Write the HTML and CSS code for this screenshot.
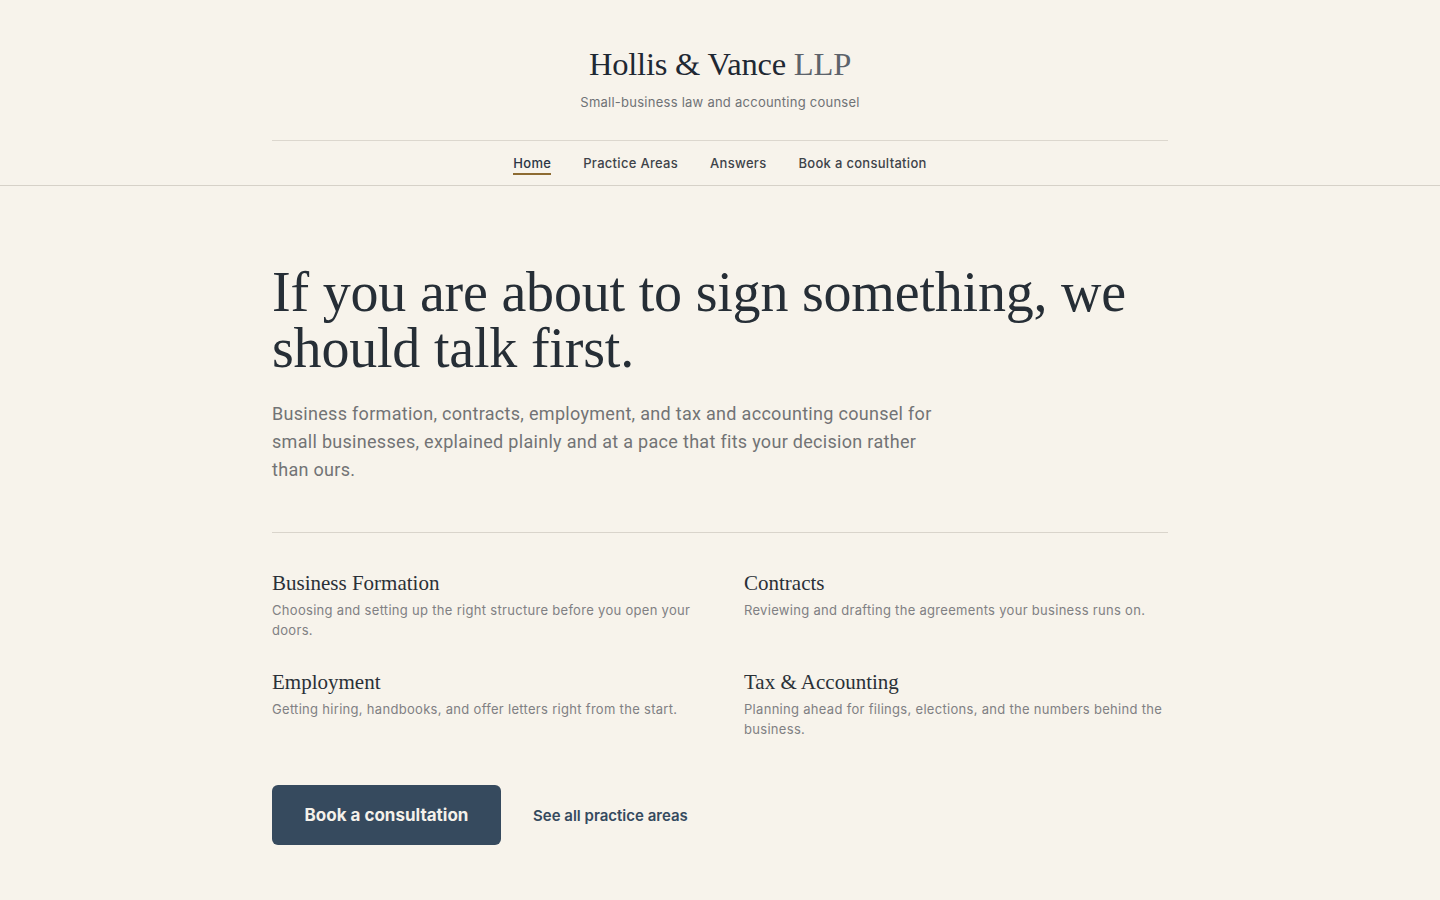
FILE: index.html
```html
<!DOCTYPE html>
<html lang="en">
<head>
<meta charset="utf-8">
<title>Hollis &amp; Vance LLP</title>
<link rel="stylesheet" href="styles.css">
</head>
<body>
<header class="site-header">
  <div class="container brand">
    <div class="logo">Hollis &amp; Vance <span class="llp">LLP</span></div>
    <div class="tagline">Small-business law and accounting counsel</div>
  </div>
  <nav class="nav">
    <div class="container nav-inner">
      <a class="nav-link active" href="#">Home</a>
      <a class="nav-link" href="#">Practice Areas</a>
      <a class="nav-link" href="#">Answers</a>
      <a class="nav-link" href="#">Book a consultation</a>
    </div>
  </nav>
</header>
<main class="container main">
  <h1 class="hero-title">If you are about to sign something, we should talk first.</h1>
  <p class="lede">Business formation, contracts, employment, and tax and accounting counsel for small businesses, explained plainly and at a pace that fits your decision rather than ours.</p>
  <hr class="divider">
  <section class="areas">
    <div class="area">
      <h2 class="area-title">Business Formation</h2>
      <p class="area-desc">Choosing and setting up the right structure before you open your doors.</p>
    </div>
    <div class="area">
      <h2 class="area-title">Contracts</h2>
      <p class="area-desc">Reviewing and drafting the agreements your business runs on.</p>
    </div>
    <div class="area">
      <h2 class="area-title">Employment</h2>
      <p class="area-desc">Getting hiring, handbooks, and offer letters right from the start.</p>
    </div>
    <div class="area">
      <h2 class="area-title">Tax &amp; Accounting</h2>
      <p class="area-desc">Planning ahead for filings, elections, and the numbers behind the business.</p>
    </div>
  </section>
  <div class="actions">
    <a class="btn" href="#">Book a consultation</a>
    <a class="text-link" href="#">See all practice areas</a>
  </div>
</main>
</body>
</html>
```
FILE: styles.css
```css
* { box-sizing: border-box; }
html, body { margin: 0; padding: 0; }
body {
  background: #f7f3eb;
  color: #232a31;
  font-family: Inter, "Noto Sans", sans-serif;
}
.container {
  width: 896px;
  margin: 0 auto;
}
.brand {
  padding-top: 44px;
  padding-bottom: 30px;
  text-align: center;
  border-bottom: 1px solid #dcd7ce;
}
.logo {
  font-family: "Liberation Serif", "Times New Roman", serif;
  font-size: 32.5px;
  line-height: 40px;
  color: #1f2833;
  letter-spacing: -0.2px;
}
.llp { color: #5d636b; }
.tagline {
  margin-top: 10px;
  font-size: 13px;
  line-height: 16px;
  color: #6f7276;
  letter-spacing: 0.25px;
}
.nav {
  border-bottom: 1px solid #d6d1c8;
}
.nav-inner {
  display: flex;
  justify-content: center;
  gap: 32px;
  padding-top: 13px;
  height: 44px;
}
.nav-link {
  font-size: 13px;
  font-weight: 500;
  line-height: 18px;
  color: #3e4349;
  text-decoration: none;
  padding-bottom: 3px;
  height: 21px;
  letter-spacing: 0.3px;
}
.nav-link.active {
  color: #2b3644;
  border-bottom: 2px solid #8d6b32;
}
.main {
  padding-top: 78px;
  padding-bottom: 40px;
}
.hero-title {
  margin: 0;
  font-family: "Liberation Serif", "Times New Roman", serif;
  font-weight: 400;
  font-size: 56px;
  line-height: 56px;
  color: #262e36;
  letter-spacing: -0.2px;
}
.lede {
  margin: 24px 0 0;
  max-width: 680px;
  font-family: Roboto, "Noto Sans", sans-serif;
  font-size: 18px;
  line-height: 28px;
  color: #727375;
  letter-spacing: 0.3px;
}
.divider {
  margin: 48px 0 0;
  border: 0;
  border-top: 1px solid #d9d4cb;
}
.areas {
  margin-top: 36px;
  display: grid;
  grid-template-columns: 1fr 1fr;
  column-gap: 48px;
  row-gap: 28px;
}
.area { min-height: 70px; }
.area-title {
  margin: 0;
  font-family: "Liberation Serif", "Times New Roman", serif;
  font-weight: 400;
  font-size: 21px;
  line-height: 28px;
  color: #2a3037;
}
.area-desc {
  margin: 3px 0 0;
  font-size: 13px;
  line-height: 20px;
  color: #808083;
  letter-spacing: 0.3px;
}
.actions {
  margin-top: 46px;
  display: flex;
  align-items: center;
  gap: 32px;
}
.btn {
  display: inline-flex;
  align-items: center;
  justify-content: center;
  width: 229px;
  height: 60px;
  background: #364a5e;
  color: #f4f1ea;
  border-radius: 6px;
  font-size: 17px;
  font-weight: 700;
  text-decoration: none;
}
.text-link {
  font-size: 15px;
  font-weight: 600;
  color: #354a5e;
  text-decoration: none;
}
```
